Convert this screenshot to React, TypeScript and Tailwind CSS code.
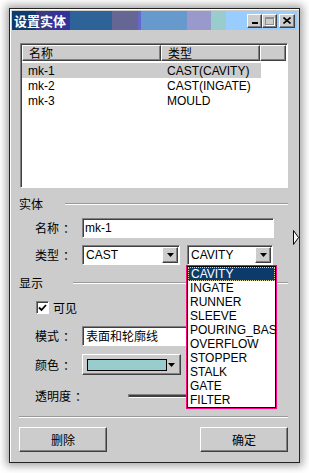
import React from "react";

const latin = "font-['Liberation_Sans','Noto_Sans_CJK_SC',sans-serif]";
const cjk = "font-['Noto_Sans_CJK_SC','Liberation_Sans',sans-serif]";

const sunken =
  "border border-t-[#808080] border-l-[#808080] border-b-white border-r-white shadow-[inset_1px_1px_0_#404040]";
const raised =
  "border border-t-white border-l-white border-b-[#404040] border-r-[#404040] shadow-[inset_-1px_-1px_0_#808080]";

const DownArrow = () => (
  <svg width="7" height="4" viewBox="0 0 7 4">
    <path d="M0 0h7L3.5 4z" fill="#000" />
  </svg>
);

const ComboButton = () => (
  <div className={`w-[16px] h-full bg-[#cccccc] flex items-center justify-center ${raised}`}>
    <DownArrow />
  </div>
);

const Label = ({ text, width }: { text: string; width: string }) => (
  <span className={`${width} ${cjk} text-[12px] text-black whitespace-nowrap`}>
    {text}
    <span className="ml-[4px]">：</span>
  </span>
);

const GroupTitle = ({ text, lineGap }: { text: string; lineGap: string }) => (
  <div className="h-[16px] flex items-center">
    <span className={`${cjk} text-[12px] leading-none text-black`}>{text}</span>
    <div className={`flex-1 ${lineGap} h-[2px] border-t border-t-[#999] border-b border-b-white`} />
  </div>
);

const options = [
  "CAVITY",
  "INGATE",
  "RUNNER",
  "SLEEVE",
  "POURING_BASIN",
  "OVERFLOW",
  "STOPPER",
  "STALK",
  "GATE",
  "FILTER",
];

const rows = [
  { name: "mk-1", type: "CAST(CAVITY)", selected: true },
  { name: "mk-2", type: "CAST(INGATE)", selected: false },
  { name: "mk-3", type: "MOULD", selected: false },
];

export default function App() {
  return (
    <div className="w-[309px] h-[473px] bg-white pt-[8px] pl-[9px] relative overflow-hidden">
      <div className="w-[291px] h-[455px] bg-[#cccccc] border border-[#222] p-[2px] flex flex-col shadow-[inset_1px_1px_0_#fff,0_0_8px_3px_rgba(0,0,0,0.35)]">
        {/* Title bar */}
        <div className="h-[19px] flex items-center justify-between bg-[linear-gradient(90deg,#0d3b6e_0,#0d3b6e_24px,#3b3a7e_24px,#3b3a7e_38px,#333399_38px,#333399_58px,#2d6399_58px,#2d6399_100px,#666695_100px,#666695_126px,#6666cc_126px,#6666cc_129px,#6699cc_129px,#6699cc_175px,#9999cc_175px,#9999cc_199px,#99cccc_199px,#99cccc_214px,#99ccff_214px)]">
          <span className={`${cjk} text-[13px] font-bold text-white leading-none pl-[2px]`}>设置实体</span>
          <div className="flex items-center pr-[2px]">
            <div className={`w-[15px] h-[14px] bg-[#cccccc] flex items-end justify-center pb-[3px] ${raised}`}>
              <div className="w-[6px] h-[2px] bg-black" />
            </div>
            <div className={`w-[15px] h-[14px] bg-[#cccccc] flex items-center justify-center ${raised}`}>
              <div className="w-[9px] h-[8px] border border-[#909090] border-t-2 shadow-[1px_1px_0_#fff]" />
            </div>
            <div className={`ml-[2px] w-[16px] h-[14px] bg-[#cccccc] flex items-center justify-center ${raised}`}>
              <svg width="8" height="7" viewBox="0 0 8 7">
                <path d="M0.5 0.5L7.5 6.5M7.5 0.5L0.5 6.5" stroke="#000" strokeWidth="1.6" />
              </svg>
            </div>
          </div>
        </div>

        {/* Body */}
        <div className="flex flex-col pl-[7px] pr-[9px]">
          {/* List */}
          <div className={`mt-[13px] ml-[1px] h-[145px] bg-white ${sunken} p-[1px] flex flex-col`}>
            <div className={`h-[16px] flex bg-[#cccccc] ${cjk} text-[12px] leading-none`}>
              <div className={`w-[139px] h-full flex items-center pl-[6px] ${raised}`}>名称</div>
              <div className={`w-[99px] h-full flex items-center pl-[6px] ${raised}`}>类型</div>
              <div className={`flex-1 h-full ${raised}`} />
            </div>
            <div className="mt-[2px] flex flex-col">
              {rows.map((r) => (
                <div
                  key={r.name}
                  className={`h-[15px] w-[239px] flex items-center ${latin} text-[12px] text-black ${
                    r.selected ? "bg-[#cccccc]" : ""
                  }`}
                >
                  <span className="w-[139px] pl-[6px]">{r.name}</span>
                  <span className="pl-[6px]">{r.type}</span>
                </div>
              ))}
            </div>
          </div>

          {/* 实体 group */}
          <div className="mt-[8px]">
            <GroupTitle text="实体" lineGap="ml-[22px]" />
          </div>

          <div className="mt-[6px] pl-[16px] flex items-center h-[20px]">
            <Label text="名称" width="w-[47px]" />
            <div className={`w-[192px] h-full bg-white ${sunken} flex items-center pl-[2px] ${latin} text-[12px]`}>
              mk-1
            </div>
          </div>

          <div className="mt-[7px] pl-[16px] flex items-center h-[20px]">
            <Label text="类型" width="w-[47px]" />
            <div className={`w-[98px] h-full bg-white ${sunken} flex items-center p-[1px] ${latin} text-[12px]`}>
              <span className="flex-1 pl-[2px]">CAST</span>
              <ComboButton />
            </div>
            <div className={`relative ml-[7px] w-[86px] h-full bg-white ${sunken} flex items-center p-[1px] ${latin} text-[12px]`}>
              <span className="flex-1 pl-[2px]">CAVITY</span>
              <ComboButton />

              {/* Open dropdown */}
              <div className="absolute left-[-2px] top-[calc(100%+1px)] w-[91px] z-10 border border-[#ff0080] bg-white">
                <div className="border border-black overflow-hidden">
                  {options.map((o, i) => (
                    <div
                      key={o}
                      className={`h-[14px] flex items-center whitespace-nowrap pl-[2px] ${latin} text-[12px] leading-none ${
                        i === 0
                          ? "bg-[#0b3a6b] text-white border border-dotted border-[#d8d0a0] pl-[1px]"
                          : "text-black"
                      }`}
                    >
                      {o}
                    </div>
                  ))}
                </div>
              </div>
            </div>
          </div>

          {/* 显示 group */}
          <div className="mt-[10px]">
            <GroupTitle text="显示" lineGap="ml-[30px]" />
          </div>

          <div className="mt-[9px] pl-[17px] flex items-center h-[15px]">
            <div className={`w-[13px] h-[13px] bg-white ${sunken} flex items-center justify-center`}>
              <svg width="9" height="8" viewBox="0 0 9 8">
                <path d="M1 3.5L3.5 6L8 1" stroke="#000" strokeWidth="1.8" fill="none" />
              </svg>
            </div>
            <span className={`ml-[4px] ${cjk} text-[12px] text-black`}>可见</span>
          </div>

          <div className="mt-[11px] pl-[16px] flex items-center h-[20px]">
            <Label text="模式" width="w-[47px]" />
            <div className={`w-[192px] h-full bg-white ${sunken} flex items-center p-[1px] ${cjk} text-[12px]`}>
              <span className="flex-1 pl-[2px]">表面和轮廓线</span>
              <ComboButton />
            </div>
          </div>

          <div className="mt-[8px] pl-[16px] flex items-center h-[21px]">
            <Label text="颜色" width="w-[47px]" />
            <div className={`w-[99px] h-full bg-[#cccccc] ${raised} flex items-center pl-[4px] pr-[5px]`}>
              <div className="w-[80px] h-[12px] bg-[#99cccc] border border-black" />
              <div className="flex-1 flex justify-center">
                <DownArrow />
              </div>
            </div>
          </div>

          <div className="mt-[11px] pl-[16px] flex items-center h-[20px]">
            <Label text="透明度" width="w-[93px]" />
            <div className="w-[70px] h-[4px] border-t border-t-[#808080] border-b border-b-white bg-[#404040] border-l border-l-[#808080]" />
          </div>

          <div className="mt-[10px] h-[2px] border-t border-t-[#999] border-b border-b-white" />

          <div className="mt-[9px] flex justify-between">
            <button className={`w-[88px] h-[25px] bg-[#cccccc] ${raised} ${cjk} text-[12px] text-black`}>删除</button>
            <button className={`w-[88px] h-[25px] bg-[#cccccc] ${raised} ${cjk} text-[12px] text-black`}>确定</button>
          </div>
        </div>
      </div>

      {/* stray pointer at right edge */}
      <svg className="absolute left-[293px] top-[230px]" width="6" height="15" viewBox="0 0 6 15">
        <path d="M0.5 0.5L5.5 7.5L0.5 14.5z" fill="#fff" stroke="#000" />
      </svg>
    </div>
  );
}
